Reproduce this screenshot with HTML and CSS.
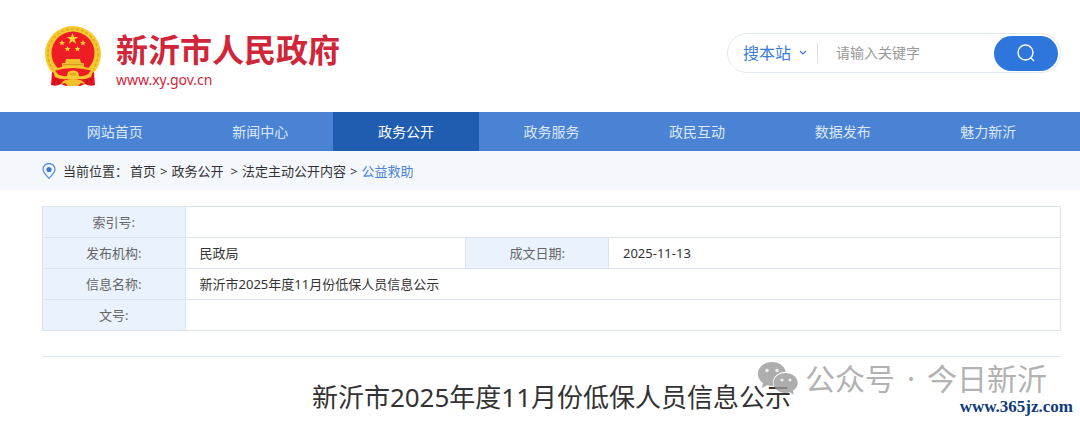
FILE: index.html
```html
<!DOCTYPE html>
<html lang="zh-CN">
<head>
  <meta charset="UTF-8" />
  <title>新沂市2025年度11月份低保人员信息公示</title>
  <meta name="viewport" content="width=device-width, initial-scale=1" />
  <link rel="stylesheet" href="styles.css">
</head>
<body>
  <header class="header wrap">
    <a class="logo" href="#">
      <svg class="emblem" viewBox="0 0 58 62" aria-hidden="true">
        <circle cx="29" cy="29" r="28" fill="#f6c92f"/>
        <circle cx="29" cy="29" r="25" fill="none" stroke="#e0a822" stroke-width="1.500" stroke-dasharray="3 2"/>
        <circle cx="29" cy="28" r="21.500" fill="#ee1c25"/>
        <g fill="#fbd62f">
          <path d="M28.500 8l1.500 4h4.200l-3.400 2.600 1.300 4.100-3.600-2.500-3.600 2.500 1.300-4.100-3.400-2.600H27z"/>
          <path d="M18 15l.8 1.900 2.100.1-1.600 1.400.5 2.100-1.800-1.200-1.800 1.200.5-2.100-1.600-1.400 2.100-.1z"/>
          <path d="M39 15l.8 1.900 2.100.1-1.600 1.400.5 2.100-1.800-1.200-1.800 1.200.5-2.100-1.600-1.400 2.100-.1z"/>
          <path d="M23.500 21l.8 1.900 2.100.1-1.600 1.400.5 2.100-1.800-1.200-1.800 1.200.5-2.100-1.600-1.400 2.100-.1z"/>
          <path d="M33.500 21l.8 1.900 2.100.1-1.600 1.400.5 2.100-1.800-1.200-1.800 1.200.5-2.100-1.600-1.400 2.100-.1z"/>
        </g>
        <path d="M22 34h14l1 4h3v5H18v-5h3z" fill="#efbe2b"/>
        <path d="M19 39.500h20" stroke="#d9981c" stroke-width="1"/>
        <path d="M9 45 Q29 39 49 45 L43 52 H15Z" fill="#ee1c25" stroke="#f6c92f" stroke-width="2" stroke-linejoin="round"/>
        <path d="M8 47 Q18 52 29 51 Q40 52 50 47 L51 60 Q46 62 41 59 L36 61 H22 L17 59 Q12 62 7 60Z" fill="#e8141f"/>
        <path d="M9 46 Q16 52 23 51 L24 47 Q29 44 34 47 L35 51 Q42 52 49 46 L47 52 Q41 55 36 54 H22 Q17 55 11 52Z" fill="#f6c92f"/>
        <path d="M25 49 Q29 46 33 49 Q29 52 25 49Z" fill="#e8a51f"/>
        <path d="M17 59 Q19 54 29 54 Q39 54 41 59 L37 58 L34 61 H24 L21 58Z" fill="#f3bf2c"/>
        <path d="M11 53l-1 7M15 54v5M43 54v5M47 53l1 7" stroke="#b50e18" stroke-width="1"/>
      </svg>
      <span class="logo-text">
        <strong class="logo-name">新沂市人民政府</strong>
        <span class="logo-url">www.xy.gov.cn</span>
      </span>
    </a>

    <form class="search">
      <div class="scope">
        <select class="scope-select" aria-label="搜索范围">
          <option>搜本站</option>
        </select>
        <svg class="scope-arrow" viewBox="0 0 8 6" aria-hidden="true"><path d="M1 1l3 3 3-3" fill="none" stroke="#3a7bd8" stroke-width="1.200"/></svg>
      </div>
      <input class="search-input" type="text" placeholder="请输入关键字" aria-label="关键字" />
      <button class="search-btn" type="submit" aria-label="搜索">
        <svg viewBox="0 0 20 20" aria-hidden="true"><circle cx="9.500" cy="9.500" r="7.500"/><path d="M15 15l3 3"/></svg>
      </button>
    </form>
  </header>

  <nav class="nav">
    <div class="nav-list wrap">
      <a href="#">网站首页</a>
      <a href="#">新闻中心</a>
      <a href="#" class="active">政务公开</a>
      <a href="#">政务服务</a>
      <a href="#">政民互动</a>
      <a href="#">数据发布</a>
      <a href="#">魅力新沂</a>
    </div>
  </nav>

  <div class="crumb">
    <div class="crumb-list wrap">
      <svg class="pin" viewBox="0 0 14 16" aria-hidden="true"><path d="M7 15.300C4 12 1 9.500 1 6.500a6 6 0 0 1 12 0c0 3-3 5.500-6 8.800z" fill="none" stroke="#5a8fdc" stroke-width="1.300"/><circle cx="7" cy="6.500" r="2.600" fill="#3a78d0"/></svg>
      <span class="crumb-label">当前位置：</span>
      <a href="#">首页</a>
      <span>&gt;</span>
      <a href="#">政务公开</a>
      <span class="crumb-gap">&gt;</span>
      <a href="#">法定主动公开内容</a>
      <span>&gt;</span>
      <a href="#" class="current">公益救助</a>
    </div>
  </div>

  <main class="content wrap">
    <table class="info">
      <colgroup>
        <col class="col-label" />
        <col class="col-org" />
        <col class="col-label" />
        <col />
      </colgroup>
      <tbody>
        <tr>
          <th scope="row">索引号:</th>
          <td colspan="3"></td>
        </tr>
        <tr>
          <th scope="row">发布机构:</th>
          <td>民政局</td>
          <th scope="row">成文日期:</th>
          <td>2025-11-13</td>
        </tr>
        <tr>
          <th scope="row">信息名称:</th>
          <td colspan="3">新沂市2025年度11月份低保人员信息公示</td>
        </tr>
        <tr>
          <th scope="row">文号:</th>
          <td colspan="3"></td>
        </tr>
      </tbody>
    </table>

    <article class="article">
      <h1>新沂市2025年度11月份低保人员信息公示</h1>
      <div class="account">
        <svg class="wechat" viewBox="0 0 42 36" aria-hidden="true">
          <path d="M15 1C7 1 1 6.300 1 13c0 3.800 2 7 5 9.300L4.800 27l5.200-2.800c1.600.5 3.300.8 5 .8h1.300c-2.300-7.600 4-14.300 12.500-14.300C27.500 5 22 1 15 1z"/>
          <path d="M28.500 12C21.500 12 16.500 16.500 16.500 22s5 10 12 10c1.500 0 3-.2 4.300-.7l4.200 2.500-1.200-4c3-1.800 4.900-4.500 4.900-7.800 0-5.500-5.200-10-12.200-10z"/>
          <g class="eyes"><circle cx="10" cy="9.500" r="1.800"/><circle cx="20" cy="9.500" r="1.800"/><circle cx="25" cy="19" r="1.500"/><circle cx="33" cy="19" r="1.500"/></g>
        </svg>
        <span>公众号</span>
        <span class="dot">·</span>
        <span>今日新沂</span>
      </div>
      <div class="site-mark">www.365jz.com</div>
    </article>
  </main>
</body>
</html>
```

FILE: styles.css
```css
* {
  box-sizing: border-box;
}

body {
  margin: 0;
  background: #fff;
  color: #333;
  font-family: "Noto Sans", "Noto Sans CJK SC", sans-serif;
  font-size: 13px;
  line-height: 20px;
}

a {
  color: inherit;
  text-decoration: none;
}

.wrap {
  padding: 0 19px 0 42px;
}

/* header */
.header {
  display: flex;
  justify-content: space-between;
  align-items: center;
  height: 112px;
}

.logo {
  display: flex;
  align-items: center;
  gap: 14px;
  padding-left: 2px;
  color: #d0263a;
}

.emblem {
  width: 58px;
  height: 62px;
}

.logo-text {
  display: flex;
  flex-direction: column;
  padding-top: 8px;
}

.logo-name {
  font-size: 32px;
  line-height: 40px;
  font-weight: 700;
}

.logo-url {
  font-size: 14px;
  line-height: 20px;
}

.search {
  display: flex;
  align-items: center;
  width: 334px;
  height: 40px;
  margin-bottom: 6px;
  padding: 0 2px 0 15px;
  border: 1px solid #e1e8f1;
  border-radius: 20px;
}

.scope {
  display: flex;
  align-items: center;
  position: relative;
  width: 75px;
  height: 20px;
  border-right: 1px solid #dde2ea;
}

.scope-select {
  appearance: none;
  width: 100%;
  padding: 0;
  border: 0;
  background: none;
  color: #3a7bd8;
  font-family: inherit;
  font-size: 16px;
  line-height: 24px;
  outline: none;
}

.scope-arrow {
  position: absolute;
  right: 10px;
  width: 8px;
  height: 6px;
  pointer-events: none;
}

.search-input {
  flex: 1;
  min-width: 0;
  padding: 0 18px;
  border: 0;
  background: none;
  font-family: inherit;
  font-size: 14px;
  line-height: 24px;
  outline: none;
}

.search-input::placeholder {
  color: #999;
}

.search-btn {
  display: flex;
  align-items: center;
  justify-content: center;
  width: 64px;
  height: 35px;
  padding: 0;
  border: 0;
  border-radius: 18px;
  background: #2e76dc;
  cursor: pointer;
}

.search-btn svg {
  width: 20px;
  height: 20px;
  fill: none;
  stroke: #fff;
  stroke-width: 1.4;
}

/* nav */
.nav {
  background: #4a83d3;
}

.nav-list {
  display: flex;
}

.nav-list a {
  flex: 1;
  color: #dce8f8;
  font-size: 14px;
  line-height: 39px;
  text-align: center;
}

.nav-list .active {
  background: #205db1;
  color: #fff;
}

/* breadcrumb */
.crumb {
  background: #f4f8fd;
}

.crumb-list {
  display: flex;
  align-items: center;
  gap: 4px;
  height: 39px;
}

.pin {
  width: 14px;
  height: 16px;
  margin-right: 3px;
}

.crumb-label {
  margin-right: -2px;
}

.crumb-gap {
  margin-left: 3px;
}

.current {
  color: #4a83d3;
}

/* document info */
.content {
  padding-top: 16px;
}

.info {
  width: 100%;
  table-layout: fixed;
  border-collapse: collapse;
}

.col-label {
  width: 14%;
}

.col-org {
  width: 27.6%;
}

.info th,
.info td {
  height: 31px;
  padding: 0 14px;
  border: 1px solid #dde4ee;
  text-align: left;
}

.info th {
  background: #eaf3fd;
  color: #666;
  font-weight: 400;
  text-align: center;
}

/* article */
.article {
  position: relative;
  margin-top: 25px;
  border-top: 1px solid #dde7f0;
}

.article h1 {
  margin: 20px 0 0;
  font-size: 26px;
  line-height: 40px;
  font-weight: 400;
  text-align: center;
}

.account {
  display: flex;
  align-items: center;
  position: absolute;
  top: 4px;
  right: 14px;
  color: #b2b2b2;
  font-size: 30px;
  line-height: 36px;
  white-space: nowrap;
}

.dot {
  margin: 0 12px;
}

.wechat {
  width: 42px;
  height: 36px;
  margin-right: 6px;
  fill: #999;
  fill-opacity: 0.8;
}

.wechat .eyes {
  fill: #fff;
}

.site-mark {
  position: absolute;
  top: 40px;
  right: -12px;
  color: #123a7c;
  font-family: "Liberation Serif", serif;
  font-size: 17px;
  line-height: 20px;
  font-weight: 700;
}
```
